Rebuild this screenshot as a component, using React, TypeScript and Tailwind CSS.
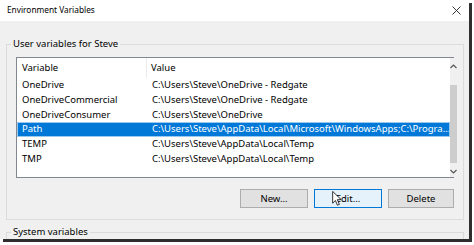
import React from 'react'

const rows = [
  { name: 'OneDrive', value: 'C:\\Users\\Steve\\OneDrive - Redgate' },
  { name: 'OneDriveCommercial', value: 'C:\\Users\\Steve\\OneDrive - Redgate' },
  { name: 'OneDriveConsumer', value: 'C:\\Users\\Steve\\OneDrive' },
  {
    name: 'Path',
    value: 'C:\\Users\\Steve\\AppData\\Local\\Microsoft\\WindowsApps;C:\\Progra...',
    selected: true,
  },
  { name: 'TEMP', value: 'C:\\Users\\Steve\\AppData\\Local\\Temp' },
  { name: 'TMP', value: 'C:\\Users\\Steve\\AppData\\Local\\Temp' },
]

function Cursor() {
  return (
    <svg
      className="absolute left-[17px] top-[1px]"
      width="10"
      height="15"
      viewBox="0 0 12 19"
    >
      <path
        d="M0.5 0.5 L0.5 15.5 L4 12 L6.5 18 L9 17 L6.5 11 L11.3 11 Z"
        fill="#fff"
        stroke="#000"
        strokeWidth="1"
        strokeLinejoin="round"
      />
    </svg>
  )
}

export default function App() {
  return (
    <div
      className="w-[474px] h-[245px] bg-white overflow-hidden text-black"
      style={{ fontFamily: '"Noto Sans", "Open Sans", sans-serif' }}
    >
      <div className="w-[469px] h-[239px] bg-[#f0f0f0] flex flex-col shadow-[3px_3px_0_#2e2e2e]">
        {/* Title bar */}
        <div className="h-[21px] bg-white flex items-center justify-between pl-[7px] pr-[8px] shrink-0">
          <span className="text-[8.3px] leading-none">Environment Variables</span>
          <svg width="9" height="9" viewBox="0 0 9 9">
            <path d="M0.5 0.5 L8.5 8.5 M8.5 0.5 L0.5 8.5" stroke="#222" strokeWidth="0.9" />
          </svg>
        </div>

        {/* Body */}
        <div className="flex-1 flex flex-col pt-[23px] pl-[6px] pr-[5px]">
          {/* User variables group */}
          <div className="relative h-[176px] border border-[#dcdcdc] px-[9px] pt-[12px]">
            <span className="absolute -top-[7px] left-[4px] bg-[#f0f0f0] px-[2px] text-[9.5px] leading-[12px]">
              User variables for Steve
            </span>

            {/* List view */}
            <div className="h-[121px] border border-[#828790] bg-white flex text-[9.5px]">
              <div className="flex-1 flex flex-col">
                <div className="h-[20px] flex items-center shrink-0">
                  <div className="w-[130px] pl-[5px] h-full flex items-center border-r border-[#ececec]">
                    Variable
                  </div>
                  <div className="pl-[4px]">Value</div>
                </div>
                <div className="flex flex-col">
                  {rows.map((r) => (
                    <div
                      key={r.name}
                      className={
                        r.selected
                          ? 'h-[14.7px] flex items-center bg-[#0078d7] text-white outline outline-1 outline-[#99c9ef] -outline-offset-1'
                          : 'h-[14.7px] flex items-center'
                      }
                    >
                      <div className="w-[130px] pl-[5px] whitespace-nowrap">{r.name}</div>
                      <div className="pl-[5px] whitespace-nowrap">{r.value}</div>
                    </div>
                  ))}
                </div>
              </div>

              {/* Scrollbar */}
              <div className="w-[13px] bg-[#f0f0f0] flex flex-col items-center">
                <div className="h-[13px] flex items-center justify-center mt-[2px]">
                  <svg width="7" height="5" viewBox="0 0 7 5">
                    <path d="M0.5 4 L3.5 1 L6.5 4" fill="none" stroke="#555" strokeWidth="1.2" />
                  </svg>
                </div>
                <div className="w-full mt-[12px] h-[78px] bg-[#cdcdcd]" />
                <div className="flex-1 flex items-end justify-center pb-[3px]">
                  <svg width="7" height="5" viewBox="0 0 7 5">
                    <path d="M0.5 1 L3.5 4 L6.5 1" fill="none" stroke="#555" strokeWidth="1.2" />
                  </svg>
                </div>
              </div>
            </div>

            {/* Buttons */}
            <div className="flex justify-end gap-[6px] mt-[11px] text-[9.5px]">
              <button className="w-[68px] h-[19px] bg-[#e1e1e1] border border-[#adadad] leading-none">
                New...
              </button>
              <button className="relative w-[68px] h-[19px] bg-[#e5f1fb] border border-[#0078d7] leading-none">
                Edit...
                <Cursor />
              </button>
              <button className="w-[66px] h-[19px] bg-[#e1e1e1] border border-[#adadad] leading-none">
                Delete
              </button>
            </div>
          </div>

          {/* System variables group */}
          <div className="relative mt-[12px] flex-1 border-t border-l border-r border-[#dcdcdc]">
            <span className="absolute -top-[7px] left-[4px] bg-[#f0f0f0] px-[2px] text-[9.5px] leading-[12px]">
              System variables
            </span>
          </div>
        </div>
      </div>
    </div>
  )
}
